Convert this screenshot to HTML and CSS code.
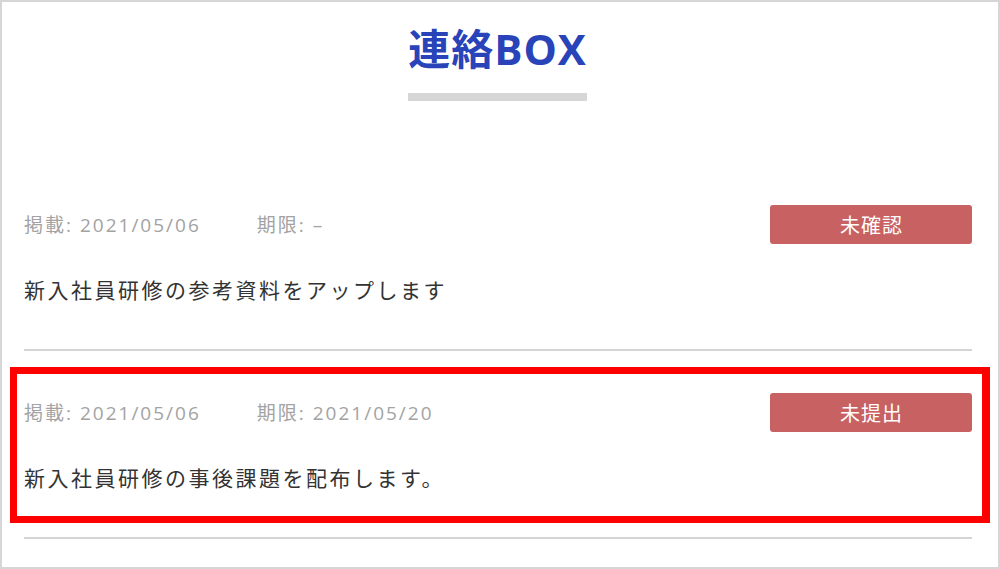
FILE: index.html
```html
<!DOCTYPE html>
<html lang="ja">
  <head>
    <meta charset="UTF-8" />
    <title>連絡BOX</title>
    <link rel="stylesheet" href="styles.css">
  </head>
  <body>
    <div class="frame">
      <div class="header">
        <h1 class="title">連絡BOX</h1>
        <div class="title-bar"></div>
      </div>

      <div class="list">
        <div class="item">
          <div class="meta">
            <span class="date">掲載: 2021/05/06</span>
            <span class="date">期限: –</span>
            <span class="badge">未確認</span>
          </div>
          <p class="message">新入社員研修の参考資料をアップします</p>
        </div>

        <div class="item highlight">
          <div class="meta">
            <span class="date">掲載: 2021/05/06</span>
            <span class="date">期限: 2021/05/20</span>
            <span class="badge">未提出</span>
          </div>
          <p class="message">新入社員研修の事後課題を配布します。</p>
        </div>
      </div>
    </div>
  </body>
</html>
```

FILE: styles.css
```css
html, body {
  margin: 0;
  height: 100%;
}

body {
  font-family: "Open Sans", "Noto Sans CJK JP", sans-serif;
  background: #fff;
}

.frame {
  height: 569px;
  box-sizing: border-box;
  border: 2px solid #d6d6d6;
  overflow: hidden;
}

.header {
  padding-top: 22px;
  padding-right: 5px;
  display: flex;
  flex-direction: column;
  align-items: center;
}

.title {
  margin: 0;
  font-size: 42px;
  line-height: 50px;
  font-weight: bold;
  letter-spacing: 1px;
  color: #2943b8;
}

.title-bar {
  width: 179px;
  height: 8px;
  margin-top: 19px;
  background: #d6d6d6;
}

.list {
  margin-top: 62px;
  padding: 0 26px 0 22px;
}

.item {
  position: relative;
  padding: 41px 0 44px;
  border-bottom: 2px solid #d4d4d4;
}

.meta {
  display: flex;
  align-items: center;
  gap: 56px;
  height: 40px;
}

.date {
  font-size: 19px;
  letter-spacing: 2px;
  color: #a3a3a3;
}

.badge {
  margin-left: auto;
  width: 202px;
  height: 39px;
  display: flex;
  align-items: center;
  justify-content: center;
  padding-left: 1px;
  box-sizing: border-box;
  border-radius: 3px;
  background: #c86161;
  color: #fff;
  font-size: 20px;
  letter-spacing: 1px;
}

.message {
  margin: 31px 0 0;
  font-size: 21px;
  line-height: 30px;
  letter-spacing: 2.5px;
  color: #333;
}

/* annotation frame drawn over the second item */
.highlight::after {
  content: "";
  position: absolute;
  top: 16px;
  bottom: 14px;
  left: -14px;
  right: -18px;
  border: 7px solid #ff0000;
  border-right-width: 8px;
  pointer-events: none;
}
```
